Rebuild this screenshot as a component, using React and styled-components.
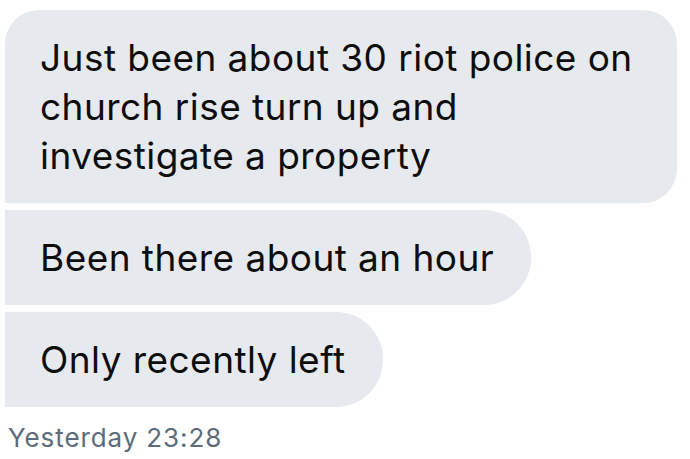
import React from 'react';
import styled, { createGlobalStyle } from 'styled-components';

const GlobalStyle = createGlobalStyle`
  html, body {
    margin: 0;
    padding: 0;
    background: #ffffff;
  }
  body {
    font-family: Inter, "Liberation Sans", sans-serif;
    -webkit-font-smoothing: antialiased;
  }
`;

const Thread = styled.section`
  display: flex;
  flex-direction: column;
  align-items: flex-start;
  gap: 7px;
  padding: 10px 0 0 5px;
`;

const Bubble = styled.div`
  box-sizing: border-box;
  max-width: 672px;
  padding: 23px 37px 23px 35px;
  background: #e6e9ed;
  color: #0d0d0d;
  font-size: 37px;
  line-height: 49px;
  letter-spacing: 0.45px;
  border-radius: ${({ $first }) => ($first ? '34px 34px 34px 0' : '0 47px 47px 0')};
`;

const Stamp = styled.div`
  margin-top: 9px;
  padding-left: 3px;
  color: #5d6b7a;
  font-size: 26px;
  line-height: 30px;
  letter-spacing: 0.9px;
`;

const messages = [
  'Just been about 30 riot police on church rise turn up and investigate a property',
  'Been there about an hour',
  'Only recently left',
];

export default function App() {
  return (
    <>
      <GlobalStyle />
      <Thread>
        {messages.map((text, i) => (
          <Bubble key={i} $first={i === 0}>
            {text}
          </Bubble>
        ))}
        <Stamp>Yesterday 23:28</Stamp>
      </Thread>
    </>
  );
}
